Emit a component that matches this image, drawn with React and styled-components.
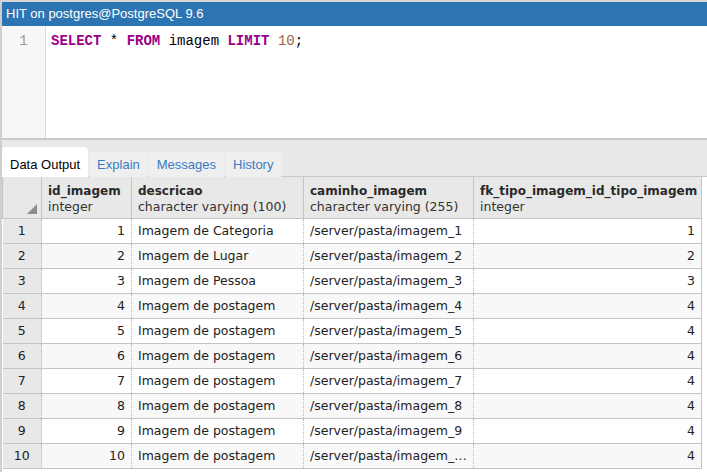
import React from 'react';
import styled, { createGlobalStyle } from 'styled-components';

const GlobalStyle = createGlobalStyle`
  html, body {
    margin: 0;
    padding: 0;
    background: #ffffff;
  }
`;

const Frame = styled.div`
  width: 705px;
  height: 470px;
  border-top: 2px solid #d6d6d6;
  border-left: 2px solid #cfcfcf;
  display: flex;
  flex-direction: column;
  overflow: hidden;
  background: #fff;
`;

const TitleBar = styled.div`
  height: 24px;
  background: #2c75b2;
  color: #fff;
  font-family: "Liberation Sans", Arial, sans-serif;
  font-size: 13px;
  line-height: 24px;
  padding-left: 4px;
  flex: none;
`;

const Editor = styled.div`
  height: 112px;
  display: flex;
  flex: none;
  border-bottom: 2px solid #c9c9c9;
`;

const Gutter = styled.div`
  width: 43px;
  background: #f7f7f7;
  border-right: 1px solid #dddddd;
  color: #999;
  font-family: "Liberation Mono", "Courier New", monospace;
  font-size: 14px;
  text-align: center;
  padding-top: 7px;
  line-height: 16px;
`;

const Code = styled.div`
  padding: 7px 0 0 5px;
  font-family: "Liberation Mono", "Courier New", monospace;
  font-size: 14px;
  line-height: 16px;
  color: #000;
  white-space: pre;
`;

const Kw = styled.span`
  color: #990088;
  font-weight: bold;
`;

const Num = styled.span`
  color: #996644;
`;

const TabBar = styled.div`
  height: 36px;
  background: #e9e9e9;
  display: flex;
  align-items: flex-end;
  flex: none;
  border-bottom: 1px solid #c9c9c9;
`;

const Tab = styled.div`
  height: ${p => (p.$active ? 30 : 25)}px;
  padding: ${p => (p.$active ? '0 8px 0 8px' : '0 8px 0 8px')};
  padding-top: ${p => (p.$active ? 5 : 0)}px;
  display: flex;
  align-items: center;
  box-sizing: border-box;
  background: ${p => (p.$active ? '#ffffff' : '#efefef')};
  border-radius: ${p => (p.$active ? '4px 4px 0 0' : '0')};
  margin-right: 1px;
  margin-bottom: -1px;
  color: ${p => (p.$active ? '#000' : '#3a7bbf')};
  font-family: "Liberation Sans", Arial, sans-serif;
  font-size: 13px;
`;

const Table = styled.table`
  border-collapse: collapse;
  table-layout: fixed;
  width: 699px;
  font-family: "DejaVu Sans", Verdana, sans-serif;
  font-size: 12.5px;
  color: #222;
`;

const HeadCell = styled.th`
  background: #e8e8e8;
  border: 1px solid #c4c4c4;
  border-top: none;
  height: 41px;
  padding: 3px 6px 0;
  box-sizing: border-box;
  text-align: left;
  vertical-align: middle;
  font-weight: normal;
  white-space: nowrap;
  overflow: hidden;
  position: relative;
`;

const ColName = styled.div`
  font-weight: bold;
  font-size: 12px;
  color: #2a2a2a;
  line-height: 16px;
`;

const ColType = styled.div`
  color: #333;
  line-height: 16px;
`;

const Corner = styled.span`
  position: absolute;
  right: 4px;
  bottom: 4px;
  width: 0;
  height: 0;
  border-left: 10px solid transparent;
  border-bottom: 10px solid #8c8c8c;
`;

const RowNum = styled.td`
  background: #e8e8e8;
  border-bottom: 1px solid #c4c4c4;
  border-right: 1px dotted #b8b8b8;
  text-align: center;
  height: 24px;
  padding: 0;
`;

const Cell = styled.td`
  background: ${p => (p.$odd ? '#f8f8f8' : '#ffffff')};
  border-bottom: 1px solid #c4c4c4;
  border-right: 1px dotted #b8b8b8;
  text-align: ${p => (p.$right ? 'right' : 'left')};
  padding: 0 6px;
  height: 24px;
  white-space: nowrap;
  overflow: hidden;
  text-overflow: ellipsis;
`;

const LastCell = styled(Cell)`
  border-right: 1px solid #c4c4c4;
`;

const rows = [
  [1, 'Imagem de Categoria', '/server/pasta/imagem_1', 1],
  [2, 'Imagem de Lugar', '/server/pasta/imagem_2', 2],
  [3, 'Imagem de Pessoa', '/server/pasta/imagem_3', 3],
  [4, 'Imagem de postagem', '/server/pasta/imagem_4', 4],
  [5, 'Imagem de postagem', '/server/pasta/imagem_5', 4],
  [6, 'Imagem de postagem', '/server/pasta/imagem_6', 4],
  [7, 'Imagem de postagem', '/server/pasta/imagem_7', 4],
  [8, 'Imagem de postagem', '/server/pasta/imagem_8', 4],
  [9, 'Imagem de postagem', '/server/pasta/imagem_9', 4],
  [10, 'Imagem de postagem', '/server/pasta/imagem_10', 4],
];

const columns = [
  { name: 'id_imagem', type: 'integer', width: 90 },
  { name: 'descricao', type: 'character varying (100)', width: 172 },
  { name: 'caminho_imagem', type: 'character varying (255)', width: 170 },
  { name: 'fk_tipo_imagem_id_tipo_imagem', type: 'integer', width: 228 },
];

function App() {
  return (
    <>
      <GlobalStyle />
      <Frame>
        <TitleBar>HIT on postgres@PostgreSQL 9.6</TitleBar>
        <Editor>
          <Gutter>1</Gutter>
          <Code>
            <Kw>SELECT</Kw> * <Kw>FROM</Kw> imagem <Kw>LIMIT</Kw> <Num>10</Num>;
          </Code>
        </Editor>
        <TabBar>
          <Tab $active>Data Output</Tab>
          <Tab>Explain</Tab>
          <Tab>Messages</Tab>
          <Tab>History</Tab>
        </TabBar>
        <Table>
          <colgroup>
            <col style={{ width: 39 }} />
            {columns.map(c => (
              <col key={c.name} style={{ width: c.width }} />
            ))}
          </colgroup>
          <thead>
            <tr>
              <HeadCell>
                <Corner />
              </HeadCell>
              {columns.map(c => (
                <HeadCell key={c.name}>
                  <ColName>{c.name}</ColName>
                  <ColType>{c.type}</ColType>
                </HeadCell>
              ))}
            </tr>
          </thead>
          <tbody>
            {rows.map((r, i) => {
              const odd = i % 2 === 1;
              return (
                <tr key={r[0]}>
                  <RowNum>{r[0]}</RowNum>
                  <Cell $odd={odd} $right>{r[0]}</Cell>
                  <Cell $odd={odd}>{r[1]}</Cell>
                  <Cell $odd={odd}>{r[2]}</Cell>
                  <LastCell $odd={odd} $right>{r[3]}</LastCell>
                </tr>
              );
            })}
          </tbody>
        </Table>
      </Frame>
    </>
  );
}

export default App;
